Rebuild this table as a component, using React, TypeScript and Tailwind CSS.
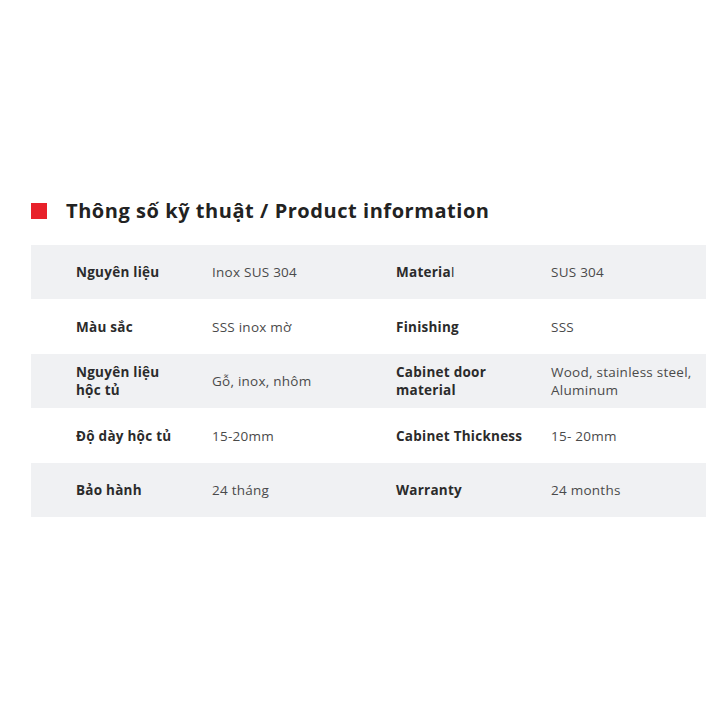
const rows: { l1: React.ReactNode; v1: React.ReactNode; l2: React.ReactNode; v2: React.ReactNode }[] = [
  { l1: 'Nguyên liệu', v1: 'Inox SUS 304', l2: <>Materia<span className="font-normal">l</span></>, v2: 'SUS 304' },
  { l1: 'Màu sắc', v1: 'SSS inox mờ', l2: 'Finishing', v2: 'SSS' },
  {
    l1: <>Nguyên liệu<br />hộc tủ</>,
    v1: 'Gỗ, inox, nhôm',
    l2: <>Cabinet door<br />material</>,
    v2: <>Wood, stainless steel,<br />Aluminum</>,
  },
  { l1: 'Độ dày hộc tủ', v1: '15-20mm', l2: 'Cabinet Thickness', v2: '15- 20mm' },
  { l1: 'Bảo hành', v1: '24 tháng', l2: 'Warranty', v2: '24 months' },
];

export default function App() {
  return (
    <div className="w-[719px] h-[719px] bg-white font-['Open_Sans',sans-serif] text-[#2b2b2b]">
      <div className="pt-[199px] pl-[31px] pr-[13px]">
        <div className="flex items-center gap-[19px] h-[24px]">
          <div className="w-4 h-4 bg-[#e8212a]" />
          <h2 className="text-[20px] font-bold tracking-[0.55px] text-[#222]">
            Thông số kỹ thuật / Product information
          </h2>
        </div>
        <div className="mt-[22px] text-[13.5px] leading-[18px] tracking-[0.25px]">
          {rows.map((r, i) => (
            <div
              key={i}
              className={`grid grid-cols-[136px_184px_155px_1fr] items-center pl-[45px] ${
                i % 2 === 0 ? 'bg-[#f0f1f3] h-[54px]' : 'bg-white h-[55px]'
              }`}
            >
              <div className="font-bold text-[#2b2b2b]">{r.l1}</div>
              <div className="text-[#4a4a4a]">{r.v1}</div>
              <div className="font-bold text-[#2b2b2b]">{r.l2}</div>
              <div className="text-[#4a4a4a]">{r.v2}</div>
            </div>
          ))}
        </div>
      </div>
    </div>
  );
}
